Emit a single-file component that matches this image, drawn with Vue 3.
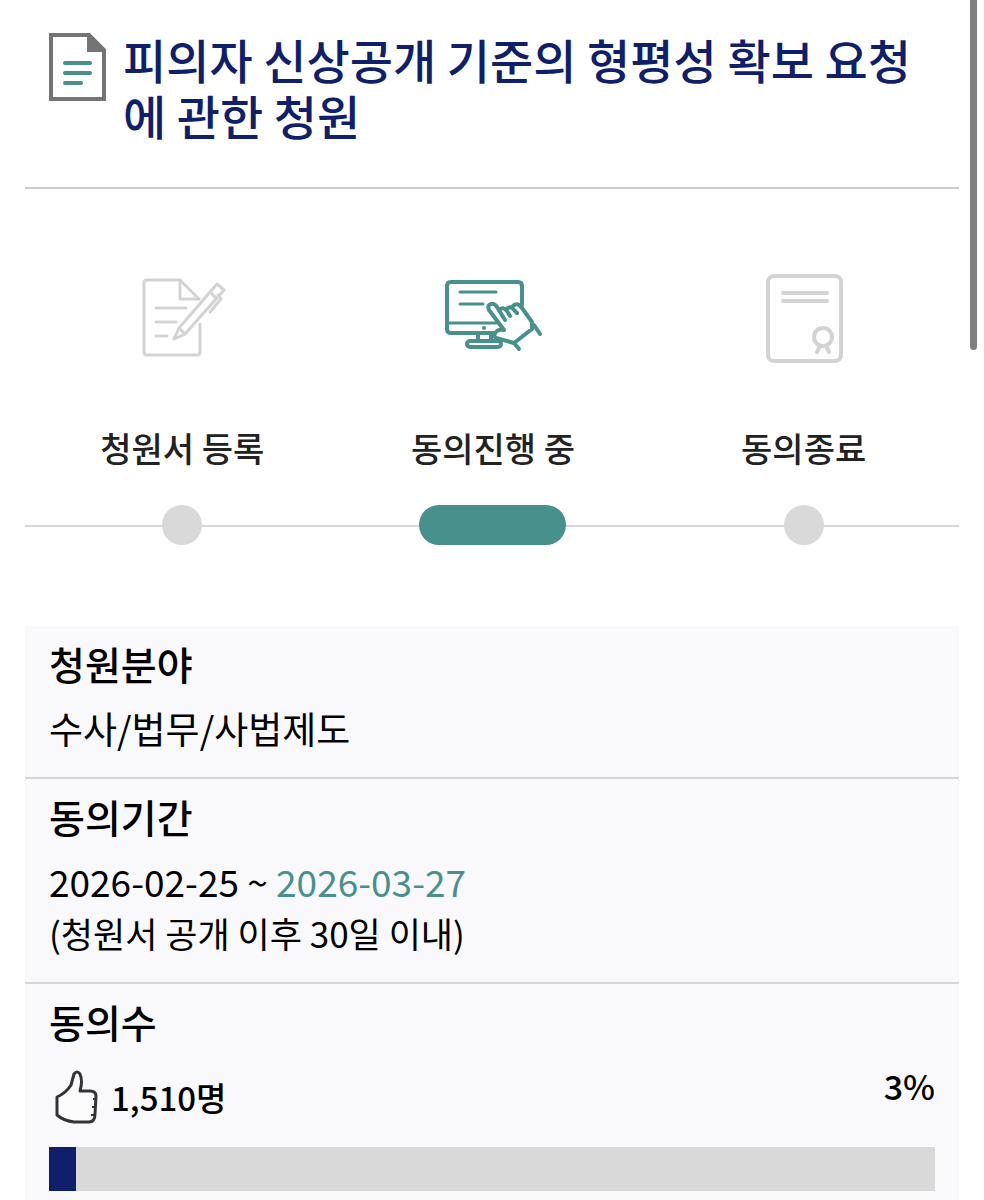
<script setup>
const steps = [
  { id: 'register', label: '청원서 등록', active: false },
  { id: 'progress', label: '동의진행 중', active: true },
  { id: 'finish', label: '동의종료', active: false },
]
const percent = 3
</script>

<template>
  <main class="page">
    <header class="title-row">
      <svg class="doc-icon" viewBox="0 0 57 70" aria-hidden="true">
        <path d="M2 4H40L55 19V68H2Z" fill="#fff" stroke="#757373" stroke-width="4" />
        <path d="M38 3H41L56 18V21H38Z" fill="#757373" />
        <path d="M16 32H41M16 42H41M16 52H32" fill="none" stroke="#48908c" stroke-width="4" stroke-linecap="round" />
      </svg>
      <h1>피의자 신상공개 기준의 형평성 확보 요청에 관한 청원</h1>
    </header>

    <ol class="steps">
      <li v-for="step in steps" :key="step.id" :class="{ active: step.active }">
        <svg v-if="step.id === 'register'" class="step-icon" viewBox="0 0 100 100" aria-hidden="true">
          <g transform="translate(7 0)" fill="none" stroke="#d3d3d3" stroke-width="3" stroke-linejoin="round" stroke-linecap="round">
            <path d="M61 55V83Q61 86 58 86H8Q5 86 5 83V14Q5 11 8 11H41L60 30" />
            <path d="M41 12V30H60" />
            <path d="M17 39H47M17 53H37M17 67H28" />
            <path d="M35 70L40 59L78 15L85 21L46 65Z" />
            <path d="M40 59L46 65M71 23L77 29M79 26L82 30L71 43" />
          </g>
        </svg>
        <svg v-else-if="step.id === 'progress'" class="step-icon" viewBox="0 0 100 100" aria-hidden="true">
          <g fill="none" stroke="#48908c" stroke-width="4" stroke-linejoin="round" stroke-linecap="round">
            <path d="M79 36V17Q79 13 75 13H8Q4 13 4 17V60Q4 64 8 64H52" />
            <path d="M5 54H53" stroke-width="3" />
            <path d="M17 23H53M17 35H40" stroke-width="3" />
            <path d="M35 65V72M48 65V72" />
            <rect x="24" y="72" width="34" height="6" rx="3" />
            <path d="M61 61L46 41Q44 36 48 35Q51 34 54 38L62 51M56 41Q60 37 64 42L67 47M63 41Q67 35 72 42L74 44M69 38Q74 32 79 39L89 53V60L71 74L53 69Q49 66 54 62Q56 60 61 61" />
            <path d="M91 56L97 65M71 74L76 80" />
          </g>
          <circle cx="41" cy="59" r="2" fill="#48908c" />
        </svg>
        <svg v-else class="step-icon" viewBox="0 0 100 100" aria-hidden="true">
          <g fill="none" stroke="#d3d3d3" stroke-width="4" stroke-linecap="round">
            <rect x="14" y="7" width="73" height="85" rx="6" />
            <path d="M29 24H73M29 32H73" />
            <circle cx="69" cy="68" r="9" />
            <path d="M66 77L63 83M72 77L75 83" />
          </g>
        </svg>
        <span class="step-label">{{ step.label }}</span>
        <span class="marker"></span>
      </li>
    </ol>

    <section class="info">
      <div class="row">
        <h2>청원분야</h2>
        <p>수사/법무/사법제도</p>
      </div>
      <div class="row">
        <h2>동의기간</h2>
        <p>2026-02-25 ~ <span class="end-date">2026-03-27</span></p>
        <p class="note">(청원서 공개 이후 30일 이내)</p>
      </div>
      <div class="row">
        <h2>동의수</h2>
        <div class="count-row">
          <svg class="thumb" viewBox="-3 -1 50 54" aria-hidden="true">
            <path d="M22 3Q25 -1 28 3Q31 10 28 20H38Q44 20 44 25L43 43Q43 51 37 51H22Q12 50 5 44V26Q14 22 19 14Z" fill="#fcfcfd" stroke="#343438" stroke-width="3" stroke-linejoin="round" />
            <path d="M41 28H44M40 36H43M39 44H42" stroke="#343438" stroke-width="2" />
          </svg>
          <strong class="count">1,510명</strong>
          <strong class="percent">{{ percent }}%</strong>
        </div>
        <div class="bar" role="progressbar" aria-label="동의수" :aria-valuenow="percent" aria-valuemin="0" aria-valuemax="100">
          <div class="fill" :style="{ width: percent + '%' }"></div>
        </div>
      </div>
    </section>
    <div class="scroll-thumb" aria-hidden="true"></div>
  </main>
</template>

<style>
body {
  background: #fff;
}
</style>

<style scoped>
.page {
  position: relative;
  box-sizing: border-box;
  padding: 0 25px;
  color: #000;
  font-family: "Noto Sans CJK KR", "Noto Sans", sans-serif;
}
h1, h2, p, ol {
  margin: 0;
  padding: 0;
}
.title-row {
  display: flex;
  align-items: flex-start;
  gap: 17px;
  padding: 31px 24px 44px;
  border-bottom: 2px solid #ccc;
}
.doc-icon {
  flex: none;
  width: 57px;
  height: 70px;
}
h1 {
  color: #0f1f6b;
  font-size: 47px;
  font-weight: 500;
  line-height: 56px;
  word-break: break-all;
}
.steps {
  display: grid;
  grid-template-columns: repeat(3, 1fr);
  list-style: none;
  padding: 80px 0 81px 2px;
  background: linear-gradient(#d6d6d6, #d6d6d6) 0 calc(100% - 99px) / 100% 2px no-repeat;
}
.steps li {
  display: flex;
  flex-direction: column;
  align-items: center;
}
.step-icon {
  width: 100px;
  height: 100px;
}
.step-label {
  margin: 55px 0 33px;
  color: #222;
  font-size: 34px;
  font-weight: 500;
  line-height: 48px;
}
.marker {
  width: 40px;
  height: 40px;
  border-radius: 20px;
  background: #d9d9d9;
}
.active .marker {
  width: 147px;
  background: #48908c;
}
.info {
  background: #f9f9fc;
}
.row {
  padding: 10px 24px 23px;
}
.row + .row {
  border-top: 2px solid #d6d6d6;
}
h2 {
  margin-bottom: 12px;
  font-size: 39px;
  font-weight: 500;
  line-height: 54px;
}
p {
  font-size: 37px;
  line-height: 52px;
}
.note {
  font-size: 35px;
}
.end-date {
  color: #48908c;
}
.count-row {
  display: flex;
  align-items: center;
  padding: 10px 0 23px;
}
.thumb {
  width: 50px;
  height: 54px;
}
.count, .percent {
  font-weight: 500;
  line-height: 52px;
}
.count {
  margin-left: 12px;
  font-size: 33px;
}
.percent {
  align-self: flex-start;
  margin: -10px 0 0 auto;
  font-size: 34px;
}
.bar {
  height: 44px;
  background: #d9d9d9;
}
.fill {
  height: 100%;
  background: #0f1f6b;
}
.scroll-thumb {
  position: absolute;
  top: -8px;
  right: 7px;
  width: 7px;
  height: 358px;
  border-radius: 4px;
  background: #808080;
}
</style>
